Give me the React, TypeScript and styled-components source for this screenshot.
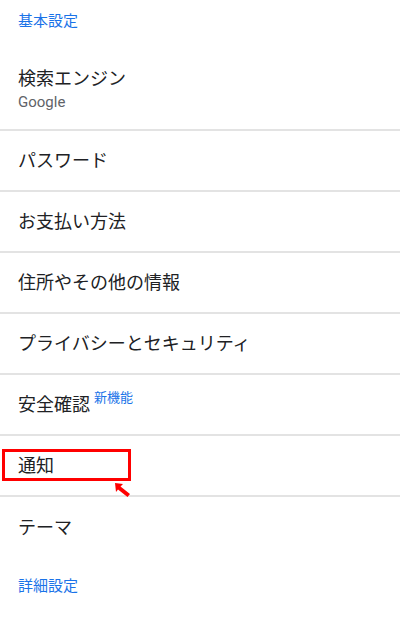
import React from "react";
import styled, { createGlobalStyle } from "styled-components";

const GlobalStyle = createGlobalStyle`
  html, body {
    margin: 0;
    padding: 0;
    background: #fff;
  }
  body {
    font-family: "Noto Sans CJK JP", Roboto, "Noto Sans", sans-serif;
  }
`;

const Page = styled.div`
  width: 400px;
  height: 618px;
  overflow: hidden;
  background: #fff;
`;

const SectionTitle = styled.div`
  height: 40px;
  display: flex;
  align-items: center;
  padding-left: 18px;
  padding-bottom: 2px;
  box-sizing: border-box;
  font-size: 15px;
  color: #1a73e8;
`;

const List = styled.div`
  display: flex;
  flex-direction: column;
`;

const Row = styled.div<{ $tall?: boolean; $last?: boolean }>`
  position: relative;
  box-sizing: border-box;
  display: flex;
  flex-direction: column;
  justify-content: center;
  padding: ${(p) => (p.$tall ? "18px 18px 10px" : "0 18px 4px")};
  height: ${(p) => (p.$tall ? "91px" : "61px")};
  border-bottom: ${(p) => (p.$last ? "none" : "2px solid #e3e3e3")};
`;

const Title = styled.div`
  font-size: 18px;
  line-height: 24px;
  color: #202124;
  display: flex;
  align-items: flex-start;
`;

const Sub = styled.div`
  font-size: 15px;
  line-height: 22px;
  margin-top: 2px;
  color: #5f6368;
  font-family: Roboto, "Noto Sans CJK JP", sans-serif;
`;

const Badge = styled.span`
  font-size: 13px;
  color: #1a73e8;
  margin-left: 4px;
  margin-top: -6px;
`;

const Highlight = styled.div`
  position: absolute;
  left: 2px;
  top: 13px;
  width: 129px;
  height: 32px;
  box-sizing: border-box;
  border: 3px solid #ff0000;
  pointer-events: none;
`;

const Arrow = styled.svg`
  position: absolute;
  left: 114px;
  top: 46px;
`;

const Footer = styled(SectionTitle)`
  height: 54px;
`;

const items = [
  "パスワード",
  "お支払い方法",
  "住所やその他の情報",
  "プライバシーとセキュリティ",
];

export default function App() {
  return (
    <Page>
      <GlobalStyle />
      <SectionTitle>基本設定</SectionTitle>
      <List>
        <Row $tall>
          <Title>検索エンジン</Title>
          <Sub>Google</Sub>
        </Row>
        {items.map((t) => (
          <Row key={t}>
            <Title>{t}</Title>
          </Row>
        ))}
        <Row>
          <Title>
            安全確認<Badge>新機能</Badge>
          </Title>
        </Row>
        <Row>
          <Title>通知</Title>
          <Highlight />
          <Arrow width="18" height="16" viewBox="0 0 18 16">
            <polygon points="1,1 9,2 6.5,4.5 16,12 13.5,15 4,7.5 2,10" fill="#ff0000" />
          </Arrow>
        </Row>
        <Row $last>
          <Title>テーマ</Title>
        </Row>
      </List>
      <Footer>詳細設定</Footer>
    </Page>
  );
}
